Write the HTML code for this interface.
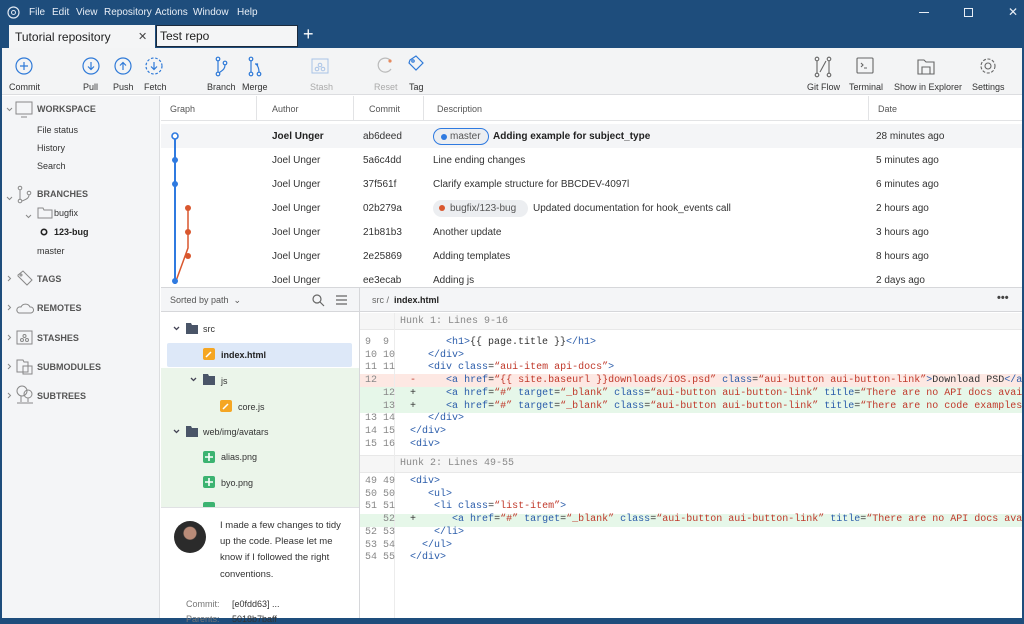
<!DOCTYPE html>
<html><head><meta charset="utf-8"><style>
*{margin:0;padding:0;box-sizing:border-box}
body{width:1024px;height:620px;overflow:hidden;background:#1e4d7c;font-family:"Liberation Sans",sans-serif;color:#333;position:relative}
.a{position:absolute;white-space:nowrap}
.m{font-family:"Liberation Mono",monospace;font-size:10px}
.menu{color:#e8eef6;font-size:10px;top:7px}
.tb{font-size:9px;color:#333;top:82px}
.sb{font-size:9px;color:#333}
.sh{font-size:9px;font-weight:bold;color:#555}
.r{font-size:10px;color:#333}
.t{color:#2a5caa}.s{color:#c0392b}.k{color:#2a5caa}
.ln{color:#888}
</style></head><body>
<svg class="a" style="left:7px;top:6px" width="13" height="13" viewBox="0 0 13 13"><circle cx="6.5" cy="6.5" r="5.5" fill="none" stroke="#dfe7f1" stroke-width="1.2"/><circle cx="6.5" cy="6.5" r="2" fill="none" stroke="#dfe7f1"/></svg>
<div class="a menu" style="left:29px">File</div>
<div class="a menu" style="left:52px">Edit</div>
<div class="a menu" style="left:76px">View</div>
<div class="a menu" style="left:104px">Repository</div>
<div class="a menu" style="left:155px">Actions</div>
<div class="a menu" style="left:193px">Window</div>
<div class="a menu" style="left:237px">Help</div>
<div class="a" style="left:919px;top:12px;width:10px;height:1px;background:#e8eef6"></div>
<div class="a" style="left:964px;top:8px;width:9px;height:9px;border:1px solid #e8eef6"></div>
<div class="a" style="left:1008px;top:5px;color:#e8eef6;font-size:12px">✕</div>
<div class="a" style="left:9px;top:25px;width:146px;height:24px;background:#f4f5f6"></div>
<div class="a" style="left:15px;top:30px;font-size:12px;color:#222">Tutorial repository</div>
<div class="a" style="left:138px;top:30px;font-size:11px;color:#444">✕</div>
<div class="a" style="left:156px;top:25px;width:142px;height:22px;background:#f4f5f6;border:1px solid #1b2a3c"></div>
<div class="a" style="left:160px;top:29px;font-size:12px;color:#222">Test repo</div>
<div class="a" style="left:303px;top:24px;font-size:18px;color:#fff">+</div>
<div class="a" style="left:2px;top:48px;width:1020px;height:570px;background:#fff"></div>
<div class="a" style="left:2px;top:48px;width:1020px;height:47px;background:#f3f4f5;border-bottom:1px solid #dcdde0"></div>
<svg class="a" style="left:0;top:48px" width="1024" height="36" viewBox="0 48 1024 36">
<g fill="none" stroke="#2f7ad8" stroke-width="1.2">
<circle cx="24" cy="66" r="8"/><path d="M24 62v8M20 66h8"/>
<circle cx="91" cy="66" r="8"/><path d="M91 62v7M88 66.5l3 3 3-3"/>
<circle cx="123" cy="66" r="8"/><path d="M123 70v-7M120 65.5l3-3 3 3"/>
<circle cx="154" cy="66" r="8" stroke-dasharray="2.5 1.8"/><path d="M154 62v7M151 66.5l3 3 3-3"/>
<circle cx="218" cy="59" r="1.8"/><circle cx="218" cy="74" r="1.8"/><circle cx="225" cy="63" r="1.8"/><path d="M218 61v11M225 65c0 5-4 6-6 8"/>
<circle cx="251" cy="59" r="1.8"/><circle cx="251" cy="74" r="1.8"/><circle cx="259" cy="74" r="1.8"/><path d="M251 61v11M259 72c0-3-1-6-3-8M255 64h2.5v2.5"/>
<path d="M410 60l6-4 7 7-7 7-7-7z"/><circle cx="413" cy="61" r="1.2"/>
</g>
<g fill="none" stroke="#a9c3e6" stroke-width="1"><rect x="312" y="59" width="16" height="14"/><circle cx="317" cy="69" r="1.8"/><circle cx="323" cy="69" r="1.8"/><circle cx="320" cy="65" r="1.8"/></g>
<path d="M390 60a7 7 0 1 0 1 9" fill="none" stroke="#bbb" stroke-width="1.2"/><circle cx="390" cy="61" r="1.6" fill="#e58a5f"/>
<g fill="none" stroke="#666" stroke-width="1.1">
<circle cx="817" cy="59" r="1.8"/><circle cx="817" cy="75" r="1.8"/><circle cx="829" cy="59" r="1.8"/><circle cx="829" cy="75" r="1.8"/><path d="M817 61v12M829 61v12M820 72l6-11"/>
<rect x="857" y="58" width="16" height="15" rx="1"/><path d="M861 63l2 2-2 2M864 68h3"/>
<path d="M918 60h6l2 2h8v12h-16z M922 67h8v7h-8z"/>
<circle cx="988" cy="66" r="3"/><circle cx="988" cy="66" r="7" stroke-dasharray="3 1.6"/>
</g></svg>
<div class="a tb" style="left:9px">Commit</div>
<div class="a tb" style="left:83px">Pull</div>
<div class="a tb" style="left:113px">Push</div>
<div class="a tb" style="left:144px">Fetch</div>
<div class="a tb" style="left:207px">Branch</div>
<div class="a tb" style="left:242px">Merge</div>
<div class="a tb" style="left:310px;color:#aaa">Stash</div>
<div class="a tb" style="left:374px;color:#aaa">Reset</div>
<div class="a tb" style="left:409px">Tag</div>
<div class="a tb" style="left:807px">Git Flow</div>
<div class="a tb" style="left:849px">Terminal</div>
<div class="a tb" style="left:894px">Show in Explorer</div>
<div class="a tb" style="left:972px">Settings</div>
<div class="a" style="left:2px;top:96px;width:158px;height:522px;background:#f4f5f7;border-right:1px solid #dcdde0"></div>
<svg class="a" style="left:0;top:96px" width="160" height="310" viewBox="0 96 160 310"><g fill="none" stroke="#888" stroke-width="1">
<path d="M7 108l2.5 2.5 2.5-2.5M7 197l2.5 2.5 2.5-2.5M26 215l2.5 2.5 2.5-2.5"/>
<path d="M8 276l2.5 2.5-2.5 2.5M8 305l2.5 2.5-2.5 2.5M8 335l2.5 2.5-2.5 2.5M8 364l2.5 2.5-2.5 2.5M8 393l2.5 2.5-2.5 2.5"/>
<rect x="16" y="102" width="16" height="12"/><path d="M21 117h6"/>
<circle cx="20" cy="188" r="1.8"/><circle cx="20" cy="201" r="1.8"/><circle cx="29" cy="193" r="1.8"/><path d="M20 190v9M29 195c0 4-5 5-7 6"/>
<path d="M38 208h5l1 2h8v8h-14z"/>
<path d="M18 275l5-4 9 9-5 5-9-9z"/><circle cx="21" cy="275" r="1"/>
<path d="M19 313a3 3 0 0 1 2-6 5 5 0 0 1 9 0 3 3 0 0 1 1 6z"/>
<rect x="17" y="331" width="15" height="13"/><circle cx="22" cy="340" r="1.5"/><circle cx="27" cy="340" r="1.5"/><circle cx="24.5" cy="336" r="1.5"/>
<path d="M17 360h6l1 2h4v10h-11z M23 366h9v8h-9z"/>
<circle cx="22" cy="391" r="5"/><circle cx="28" cy="394" r="4"/><path d="M21 396v6M28 398v4M17 403h16"/>
</g><circle cx="44" cy="232" r="2.7" fill="none" stroke="#222" stroke-width="1.6"/></svg>
<div class="a sh" style="left:37px;top:104px">WORKSPACE</div>
<div class="a sb" style="left:37px;top:125px">File status</div>
<div class="a sb" style="left:37px;top:143px">History</div>
<div class="a sb" style="left:37px;top:161px">Search</div>
<div class="a sh" style="left:37px;top:189px">BRANCHES</div>
<div class="a sb" style="left:54px;top:208px">bugfix</div>
<div class="a sb" style="left:54px;top:227px;font-weight:bold;color:#222">123-bug</div>
<div class="a sb" style="left:37px;top:246px">master</div>
<div class="a sh" style="left:37px;top:274px">TAGS</div>
<div class="a sh" style="left:37px;top:303px">REMOTES</div>
<div class="a sh" style="left:37px;top:333px">STASHES</div>
<div class="a sh" style="left:37px;top:362px">SUBMODULES</div>
<div class="a sh" style="left:37px;top:391px">SUBTREES</div>
<div class="a" style="left:161px;top:96px;width:861px;height:25px;background:#fff;border-bottom:1px solid #e2e3e5"></div>
<div class="a" style="left:256px;top:96px;width:1px;height:25px;background:#e2e3e5"></div>
<div class="a" style="left:353px;top:96px;width:1px;height:25px;background:#e2e3e5"></div>
<div class="a" style="left:423px;top:96px;width:1px;height:25px;background:#e2e3e5"></div>
<div class="a" style="left:868px;top:96px;width:1px;height:25px;background:#e2e3e5"></div>
<div class="a sb" style="left:170px;top:104px;color:#555">Graph</div>
<div class="a sb" style="left:272px;top:104px;color:#555">Author</div>
<div class="a sb" style="left:369px;top:104px;color:#555">Commit</div>
<div class="a sb" style="left:437px;top:104px;color:#555">Description</div>
<div class="a sb" style="left:878px;top:104px;color:#555">Date</div>
<div class="a" style="left:161px;top:124px;width:861px;height:24px;background:#f4f5f7"></div>
<svg class="a" style="left:160px;top:121px" width="40" height="167" viewBox="160 121 40 167">
<path d="M175 136v148" stroke="#2f7ae0" stroke-width="2"/>
<path d="M188 208v40l-12 33" stroke="#d9572e" stroke-width="1.5" fill="none"/>
<circle cx="175" cy="136" r="3" fill="#fff" stroke="#2f7ae0" stroke-width="1.6"/>
<g fill="#2f7ae0"><circle cx="175" cy="160" r="3"/><circle cx="175" cy="184" r="3"/><circle cx="175" cy="281" r="3"/></g>
<g fill="#d9572e"><circle cx="188" cy="208" r="3"/><circle cx="188" cy="232" r="3"/><circle cx="188" cy="256" r="3"/></g></svg>
<div class="a r" style="left:272px;top:131px;font-weight:bold;color:#222">Joel Unger</div>
<div class="a r" style="left:272px;top:155px">Joel Unger</div>
<div class="a r" style="left:272px;top:179px">Joel Unger</div>
<div class="a r" style="left:272px;top:203px">Joel Unger</div>
<div class="a r" style="left:272px;top:227px">Joel Unger</div>
<div class="a r" style="left:272px;top:251px">Joel Unger</div>
<div class="a r" style="left:272px;top:275px">Joel Unger</div>
<div class="a r" style="left:363px;top:131px">ab6deed</div>
<div class="a r" style="left:363px;top:155px">5a6c4dd</div>
<div class="a r" style="left:363px;top:179px">37f561f</div>
<div class="a r" style="left:363px;top:203px">02b279a</div>
<div class="a r" style="left:363px;top:227px">21b81b3</div>
<div class="a r" style="left:363px;top:251px">2e25869</div>
<div class="a r" style="left:363px;top:275px">ee3ecab</div>
<div class="a" style="left:433px;top:128px;width:56px;height:17px;border:1.3px solid #2f7ae0;border-radius:9px;background:#eceef1"></div>
<div class="a" style="left:441px;top:134px;width:6px;height:6px;border-radius:50%;background:#2f7ae0"></div>
<div class="a r" style="left:450px;top:131px;color:#555">master</div>
<div class="a r" style="left:493px;top:131px;font-weight:bold;color:#222">Adding example for subject_type</div>
<div class="a r" style="left:433px;top:155px">Line ending changes</div>
<div class="a r" style="left:433px;top:179px">Clarify example structure for BBCDEV-4097l</div>
<div class="a" style="left:433px;top:200px;width:95px;height:17px;border-radius:9px;background:#eceef1"></div>
<div class="a" style="left:439px;top:205px;width:6px;height:6px;border-radius:50%;background:#d9572e"></div>
<div class="a r" style="left:450px;top:203px;color:#555">bugfix/123-bug</div>
<div class="a r" style="left:533px;top:203px">Updated documentation for hook_events call</div>
<div class="a r" style="left:433px;top:227px">Another update</div>
<div class="a r" style="left:433px;top:251px">Adding templates</div>
<div class="a r" style="left:433px;top:275px">Adding js</div>
<div class="a r" style="left:876px;top:131px">28 minutes ago</div>
<div class="a r" style="left:876px;top:155px">5 minutes ago</div>
<div class="a r" style="left:876px;top:179px">6 minutes ago</div>
<div class="a r" style="left:876px;top:203px">2 hours ago</div>
<div class="a r" style="left:876px;top:227px">3 hours ago</div>
<div class="a r" style="left:876px;top:251px">8 hours ago</div>
<div class="a r" style="left:876px;top:275px">2 days ago</div>
<div class="a" style="left:161px;top:287px;width:861px;height:1px;background:#d6d7da"></div>
<div class="a" style="left:161px;top:288px;width:861px;height:24px;background:#f4f5f7;border-bottom:1px solid #d6d7da"></div>
<div class="a" style="left:359px;top:288px;width:1px;height:330px;background:#d6d7da"></div>
<div class="a sb" style="left:170px;top:295px;color:#555">Sorted by path &nbsp;⌄</div>
<svg class="a" style="left:310px;top:292px" width="40" height="16"><g fill="none" stroke="#666" stroke-width="1.2"><circle cx="7" cy="7" r="4"/><path d="M10 10l4 4M26 4h11M26 8h11M26 12h11"/></g></svg>
<div class="a sb" style="left:372px;top:295px;color:#666">src / &nbsp;<b style="color:#222">index.html</b></div>
<div class="a" style="left:997px;top:292px;font-size:11px;color:#444;font-weight:bold">•••</div>
<div class="a" style="left:161px;top:368px;width:198px;height:139px;background:#ebf5ea"></div>
<div class="a" style="left:167px;top:343px;width:185px;height:24px;background:#dde8f8;border-radius:2px"></div>
<svg class="a" style="left:161px;top:313px" width="198" height="200" viewBox="161 313 198 200"><g fill="none" stroke="#445" stroke-width="1.3"><path d="M174 327l2.5 2.5 2.5-2.5M191 378l2.5 2.5 2.5-2.5M174 430l2.5 2.5 2.5-2.5"/></g>
<g fill="#4a5568"><path d="M186 323h5l1 2h6v9h-12z"/><path d="M203 374h5l1 2h6v9h-12z"/><path d="M186 426h5l1 2h6v9h-12z"/></g>
<rect x="203" y="348" width="12" height="12" rx="2" fill="#f5a623"/><rect x="220" y="400" width="12" height="12" rx="2" fill="#f5a623"/>
<path d="M206 357l5-5M223 409l5-5" stroke="#fff" stroke-width="1.5"/>
<rect x="203" y="451" width="12" height="12" rx="2" fill="#3cb371"/><rect x="203" y="476" width="12" height="12" rx="2" fill="#3cb371"/><rect x="203" y="502" width="12" height="12" rx="2" fill="#3cb371"/>
<path d="M209 453v8M205 457h8M209 478v8M205 482h8" stroke="#fff" stroke-width="1.6"/></svg>
<div class="a sb" style="left:203px;top:324px">src</div>
<div class="a sb" style="left:221px;top:350px;font-weight:bold;color:#222">index.html</div>
<div class="a sb" style="left:221px;top:376px">js</div>
<div class="a sb" style="left:238px;top:402px">core.js</div>
<div class="a sb" style="left:203px;top:427px">web/img/avatars</div>
<div class="a sb" style="left:221px;top:452px">alias.png</div>
<div class="a sb" style="left:221px;top:478px">byo.png</div>
<div class="a" style="left:161px;top:507px;width:198px;height:111px;background:#fff;border-top:1px solid #e0e1e4"></div>
<div class="a" style="left:174px;top:521px;width:32px;height:32px;border-radius:50%;background:radial-gradient(circle at 50% 38%,#b98b78 0 6px,#2b2b2b 7px);"></div>
<div class="a" style="left:220px;top:518px;font-size:9.5px;line-height:16.2px;color:#333;white-space:normal;width:128px">I made a few changes to tidy up the code. Please let me know if I followed the right conventions.</div>
<div class="a sb" style="left:186px;top:599px;color:#777">Commit:</div>
<div class="a sb" style="left:232px;top:599px">[e0fdd63] ...</div>
<div class="a sb" style="left:186px;top:614px;color:#777">Parents:</div>
<div class="a sb" style="left:232px;top:614px">5018b7baff</div>
<div class="a" style="left:360px;top:313px;width:662px;height:305px;background:#fff"></div>
<div class="a" style="left:360px;top:313px;width:662px;height:17px;background:#f6f6f6;border-bottom:1px solid #e8e8e8"></div>
<div class="a" style="left:360px;top:455px;width:662px;height:18px;background:#f6f6f6;border-top:1px solid #e8e8e8;border-bottom:1px solid #e8e8e8"></div>
<div class="a" style="left:360px;top:374px;width:662px;height:13px;background:#fde8e3"></div>
<div class="a" style="left:360px;top:387px;width:662px;height:26px;background:#e6f7e9"></div>
<div class="a" style="left:360px;top:514px;width:662px;height:13px;background:#e6f7e9"></div>
<div class="a" style="left:394px;top:313px;width:1px;height:305px;background:#ececec"></div>
<div class="a m ln" style="left:400px;top:316px">Hunk 1: Lines 9-16</div>
<div class="a m ln" style="left:400px;top:458px">Hunk 2: Lines 49-55</div>
<div class="a m" style="left:365px;top:337px;line-height:12.7px;color:#888;white-space:pre">9  9
10 10
11 11
12
   12
   13
13 14
14 15
15 16</div>
<div class="a m" style="left:365px;top:476px;line-height:12.7px;color:#888;white-space:pre">49 49
50 50
51 51
   52
52 53
53 54
54 55</div>
<div class="a m" style="left:410px;top:337px;line-height:12.7px;color:#333;white-space:pre">      <span class="t">&lt;h1&gt;</span>{{ page.title }}<span class="t">&lt;/h1&gt;</span>
   <span class="t">&lt;/div&gt;</span>
   <span class="t">&lt;div</span> <span class="k">class</span>=<span class="s">“aui-item api-docs”</span><span class="t">&gt;</span>
<span style="color:#c0392b">-</span>     <span class="t">&lt;a</span> <span class="k">href</span>=<span class="s">“{{ site.baseurl }}downloads/iOS.psd”</span> <span class="k">class</span>=<span class="s">“aui-button aui-button-link”</span><span class="t">&gt;</span>Download PSD<span class="t">&lt;/a&gt;</span>
+     <span class="t">&lt;a</span> <span class="k">href</span>=<span class="s">“#”</span> <span class="k">target</span>=<span class="s">“_blank”</span> <span class="k">class</span>=<span class="s">“aui-button aui-button-link”</span> <span class="k">title</span>=<span class="s">“There are no API docs available”</span>
+     <span class="t">&lt;a</span> <span class="k">href</span>=<span class="s">“#”</span> <span class="k">target</span>=<span class="s">“_blank”</span> <span class="k">class</span>=<span class="s">“aui-button aui-button-link”</span> <span class="k">title</span>=<span class="s">“There are no code examples”</span>
   <span class="t">&lt;/div&gt;</span>
<span class="t">&lt;/div&gt;</span>
<span class="t">&lt;div&gt;</span></div>
<div class="a m" style="left:410px;top:476px;line-height:12.7px;color:#333;white-space:pre"><span class="t">&lt;div&gt;</span>
   <span class="t">&lt;ul&gt;</span>
    <span class="t">&lt;li</span> <span class="k">class</span>=<span class="s">“list-item”</span><span class="t">&gt;</span>
+      <span class="t">&lt;a</span> <span class="k">href</span>=<span class="s">“#”</span> <span class="k">target</span>=<span class="s">“_blank”</span> <span class="k">class</span>=<span class="s">“aui-button aui-button-link”</span> <span class="k">title</span>=<span class="s">“There are no API docs available”</span>
    <span class="t">&lt;/li&gt;</span>
  <span class="t">&lt;/ul&gt;</span>
<span class="t">&lt;/div&gt;</span></div>
<div class="a" style="left:1022px;top:48px;width:2px;height:572px;background:#1e4d7c"></div>
</body></html>
